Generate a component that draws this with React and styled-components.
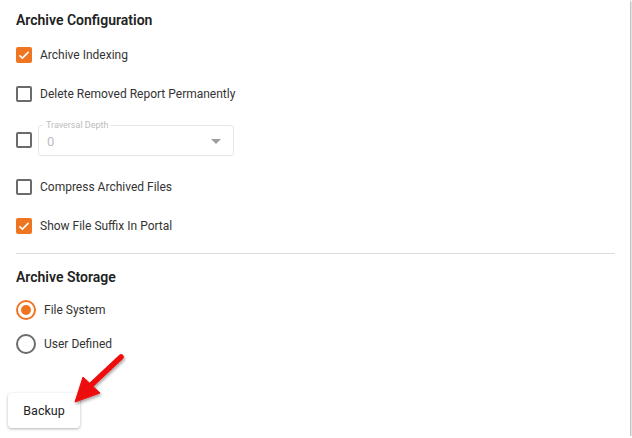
import React from "react";
import styled, { createGlobalStyle } from "styled-components";

const ORANGE = "#ef7521";

const Global = createGlobalStyle`
  html, body { margin: 0; padding: 0; background: #fff; }
  body { font-family: Roboto, "Liberation Sans", Arial, sans-serif; color: #222; }
`;

const Card = styled.div`
  position: relative;
  box-sizing: border-box;
  width: 630px;
  height: 436px;
  background: #fff;
  box-shadow: 1px 1px 2px rgba(0, 0, 0, 0.35);
  padding: 12px 15px 0 8px;
  display: flex;
  flex-direction: column;
`;

const Section = styled.section`
  display: flex;
  flex-direction: column;
  padding-left: 8px;
`;

const Title = styled.h2`
  margin: 0 0 ${(p) => p.$gap}px 0;
  font-size: 14px;
  line-height: 16px;
  font-weight: 600;
  color: #222;
`;

const Row = styled.label`
  display: flex;
  align-items: center;
  height: ${(p) => p.$h || 39}px;
  gap: ${(p) => p.$gap || 8}px;
  font-size: 12px;
  color: #333;
`;

const Box = styled.span`
  box-sizing: border-box;
  width: 16px;
  height: 16px;
  border-radius: 2px;
  flex: none;
  display: flex;
  align-items: center;
  justify-content: center;
  border: ${(p) => (p.$on ? "none" : "2px solid #6b6b6b")};
  background: ${(p) => (p.$on ? ORANGE : "#fff")};
`;

const Radio = styled.span`
  box-sizing: border-box;
  width: 20px;
  height: 20px;
  border-radius: 50%;
  flex: none;
  display: flex;
  align-items: center;
  justify-content: center;
  border: 2px solid ${(p) => (p.$on ? ORANGE : "#6b6b6b")};
  &::after {
    content: "";
    display: ${(p) => (p.$on ? "block" : "none")};
    width: 10px;
    height: 10px;
    border-radius: 50%;
    background: ${ORANGE};
  }
`;

const Field = styled.div`
  position: relative;
  box-sizing: border-box;
  width: 196px;
  height: 31px;
  margin-left: -2px;
  border: 1px solid #e6e6e6;
  border-radius: 3px;
  display: flex;
  align-items: center;
  justify-content: space-between;
  padding: 2px 12px 0 8px;
  color: #bdbdbd;
  font-size: 13px;
`;

const FieldLabel = styled.span`
  position: absolute;
  top: -6px;
  left: 4px;
  padding: 0 3px;
  background: #fff;
  font-size: 9px;
  line-height: 10px;
  color: #bdbdbd;
`;

const Divider = styled.hr`
  border: none;
  border-top: 1px solid #dcdcdc;
  margin: 8px 0 15px 8px;
  height: 0;
`;

const Footer = styled.div`
  margin-top: auto;
  padding-bottom: 8px;
`;

const Button = styled.button`
  width: 72px;
  height: 35px;
  border: none;
  border-radius: 4px;
  background: #fff;
  box-shadow: 0 1px 3px rgba(0, 0, 0, 0.3);
  font-family: inherit;
  font-size: 12.5px;
  font-weight: 400;
  color: #222;
  padding: 0;
`;

const Overlay = styled.svg`
  position: absolute;
  left: 0;
  top: 0;
  pointer-events: none;
`;

const Check = () => (
  <svg width="16" height="16" viewBox="0 0 16 16">
    <path d="M3.4 8.3 L6.4 11.1 L12.6 4.9" fill="none" stroke="#fff" strokeWidth="1.6" />
  </svg>
);

const CheckRow = ({ on, children, h }) => (
  <Row $h={h}>
    <Box $on={on}>{on && <Check />}</Box>
    {children}
  </Row>
);

export default function App() {
  return (
    <>
      <Global />
      <Card>
        <Section>
          <Title $gap={7}>Archive Configuration</Title>
          <CheckRow on>Archive Indexing</CheckRow>
          <CheckRow>Delete Removed Report Permanently</CheckRow>
          <Row $h={54} $gap={8}>
            <Box />
            <Field>
              <FieldLabel>Traversal Depth</FieldLabel>
              <span>0</span>
              <svg width="10" height="5" viewBox="0 0 10 5">
                <path d="M0 0 L10 0 L5 5 Z" fill="#9e9e9e" />
              </svg>
            </Field>
          </Row>
          <CheckRow>Compress Archived Files</CheckRow>
          <CheckRow on>Show File Suffix In Portal</CheckRow>
        </Section>
        <Divider />
        <Section>
          <Title $gap={8}>Archive Storage</Title>
          <Row $h={34}>
            <Radio $on />
            File System
          </Row>
          <Row $h={34}>
            <Radio />
            User Defined
          </Row>
        </Section>
        <Footer>
          <Button>Backup</Button>
        </Footer>
        <Overlay width="630" height="436" viewBox="0 0 630 436">
          <defs>
            <filter id="sh" x="-50%" y="-50%" width="200%" height="200%">
              <feDropShadow dx="1" dy="2" stdDeviation="1.5" floodColor="#000" floodOpacity="0.35" />
            </filter>
          </defs>
          <g filter="url(#sh)" fill="#ee0a0a" stroke="#ee0a0a">
            <line x1="121" y1="357" x2="90" y2="386" strokeWidth="5.5" strokeLinecap="round" />
            <polygon points="75,402 83,377 100,393" strokeWidth="1" strokeLinejoin="round" />
          </g>
        </Overlay>
      </Card>
    </>
  );
}
